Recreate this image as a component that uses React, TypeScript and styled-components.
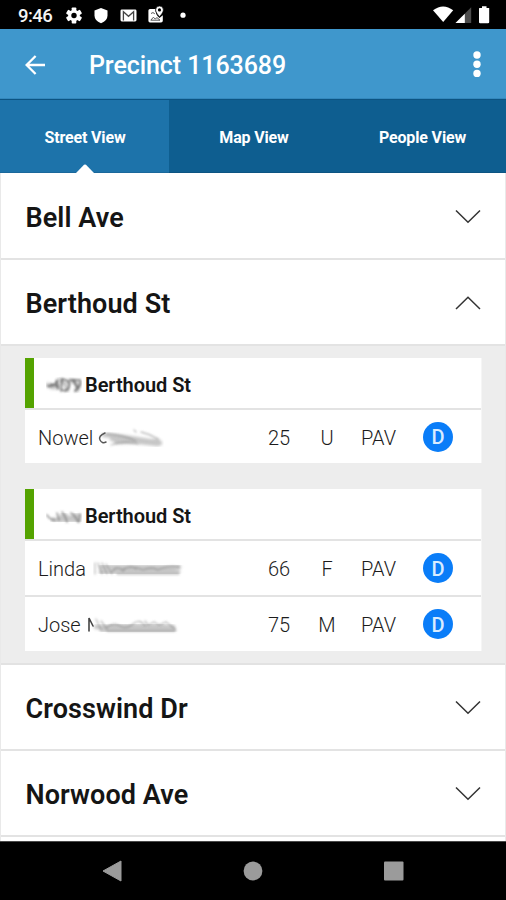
import React from "react";
import styled, { createGlobalStyle } from "styled-components";

const GlobalStyle = createGlobalStyle`
  * { box-sizing: border-box; }
  body { margin: 0; background: #000; }
  svg { display: block; flex: none; }
`;

const Screen = styled.div`
  width: 506px;
  height: 900px;
  display: flex;
  flex-direction: column;
  overflow: hidden;
  background: #fff;
  color: #151515;
  font-family: Roboto, "Liberation Sans", sans-serif;
`;

const StatusBar = styled.div`
  flex: none;
  height: 29px;
  padding: 0 16px 0 18px;
  display: flex;
  align-items: center;
  justify-content: space-between;
  background: #000;
`;

const Clock = styled.span`
  width: 46px;
  color: #f4f4f4;
  font-size: 18.5px;
  font-weight: 500;
  line-height: 29px;
  padding-top: 3px;
  letter-spacing: -0.55px;
`;

const StatusGroup = styled.div`
  display: flex;
  align-items: center;
`;

const AppBar = styled.header`
  flex: none;
  height: 70px;
  display: flex;
  align-items: center;
  padding: 2px 20px 0 25px;
  background: #3f97cc;
  border-bottom: 1px solid #3388bd;
`;

const Title = styled.h1`
  flex: 1;
  margin: 0 0 0 44px;
  padding-top: 3px;
  color: #fff;
  font-size: 25px;
  font-weight: 500;
  line-height: 32px;
  letter-spacing: -0.08px;
`;

const Tabs = styled.nav`
  flex: none;
  height: 74px;
  display: grid;
  grid-template-columns: 169px 169px 168px;
  border-top: 1px solid #0c5482;
  background: #0e5e90;
`;

const Tab = styled.div<{ $active?: boolean }>`
  position: relative;
  display: flex;
  align-items: center;
  justify-content: center;
  background: ${(p) => (p.$active ? "#1d73aa" : "#0e5e90")};
  border-bottom: 1px solid ${(p) => (p.$active ? "#1a689b" : "#0c5482")};
  color: #fff;
  font-size: 16px;
  font-weight: 700;
  letter-spacing: -0.15px;
  padding: 2px 0 0 1px;
`;

const Pointer = styled.svg`
  position: absolute;
  left: 76px;
  bottom: -1px;
`;

const Content = styled.main`
  flex: 1;
  min-height: 0;
  overflow: hidden;
  border-left: 1px solid #e9e9e9;
  border-right: 1px solid #e9e9e9;
`;

const Street = styled.section<{ $raised?: boolean }>`
  height: ${(p) => (p.$raised ? "87px" : "86px")};
  padding: 0 24px 0 24px;
  display: flex;
  align-items: center;
  justify-content: space-between;
  border-bottom: 2px solid #e3e3e3;
  background: #fff;
`;

const StreetName = styled.h2<{ $raised?: boolean }>`
  margin: 0;
  padding: ${(p) => (p.$raised ? "5px" : "3px")} 0 0 0.5px;
  font-size: 27px;
  font-weight: 600;
  line-height: 36px;
  letter-spacing: 0.08px;
`;

const Panel = styled.div`
  height: 319px;
  margin: 0 -1px;
  padding: 12px 24px 0 25px;
  display: flex;
  flex-direction: column;
  gap: 26px;
  background: #ededed;
  border-bottom: 2px solid #e2e2e2;
`;

const Card = styled.div`
  background: #fff;
  border-right: 1px solid #f5f5f5;
`;

const Address = styled.div`
  height: 50px;
  display: flex;
  align-items: center;
  border-left: 9px solid #54a300;
  padding: 3px 0 0 12px;
  font-size: 20px;
  font-weight: 600;
  letter-spacing: -0.06px;
  gap: 3px;
`;

const Voter = styled.div`
  height: 56px;
  padding: 2px 0 0 13px;
  display: grid;
  grid-template-columns: 216px 50px 46px 57px 62px;
  align-items: center;
  border-top: 2px solid #e3e3e3;
  font-size: 20px;
  font-weight: 350;
  color: #1c1c1c;

  &:nth-child(2):last-child {
    height: 55px;
  }
`;

const Person = styled.div<{ $gap: number }>`
  display: flex;
  align-items: center;
  gap: ${(p) => p.$gap}px;
`;

const Cell = styled.div`
  text-align: center;
`;

const Party = styled.div`
  width: 30px;
  height: 30px;
  margin: -2px auto 0;
  display: flex;
  align-items: center;
  justify-content: center;
  border-radius: 50%;
  background: #0a7df8;
  color: #d9ecff;
  font-size: 20px;
  font-weight: 500;
  padding-top: 1px;
`;

const NavBar = styled.footer`
  flex: none;
  height: 59px;
  display: grid;
  grid-template-columns: 183px 140px 183px;
  align-items: center;
  background: #000;
  border-top: 1px solid #4a4a4a;
`;

const NavButton = styled.div<{ $side: "start" | "middle" | "end" }>`
  display: flex;
  justify-content: ${(p) => (p.$side === "start" ? "flex-start" : p.$side === "end" ? "flex-end" : "center")};
  padding: ${(p) => (p.$side === "start" ? "0 0 0 102px" : p.$side === "end" ? "0 102px 0 0" : "0")};
`;

const Chevron = ({ up }: { up?: boolean }) => (
  <svg width="26" height="18" viewBox="0 -2 26 18" fill="none" stroke="#333" strokeWidth="1.5">
    <path d={up ? "M1 14 13 2.2 25 14" : "M1 1.5 13 13.3 25 1.5"} />
  </svg>
);

const StatusIcons = () => (
  <svg width="122" height="29" viewBox="64 0 122 29" fill="#fff">
    <g transform="translate(74 15.5)">
      {[0, 60, 120].map((a) => (
        <rect key={a} x="-2.3" y="-8" width="4.6" height="16" rx="0.8" transform={`rotate(${a})`} />
      ))}
      <circle r="5.8" />
      <circle r="2.7" fill="#000" />
    </g>
    <path d="M101 8 107.5 10.5V15.5Q107.5 20.7 101 23.2 94.5 20.7 94.5 15.5V10.5Z" />
    <rect x="120.5" y="9.5" width="16" height="12" rx="1.4" />
    <path d="M123.4 20.5V11.8L128.5 16.3 133.6 11.8V20.5" fill="none" stroke="#444" strokeWidth="1.3" />
    <path d="M150 9H155.6Q154.8 14 159.5 18L162.8 15.2V20.7Q162.8 22.4 161 22.4H150Q148.4 22.4 148.4 20.7V10.6Q148.4 9 150 9Z" />
    <path d="M159.5 6A3.9 3.9 0 0 1 163.4 9.9C163.4 12.8 159.5 16.5 159.5 16.5S155.6 12.8 155.6 9.9A3.9 3.9 0 0 1 159.5 6Z" stroke="#000" strokeWidth="0.7" />
    <circle cx="159.5" cy="9.9" r="1.6" fill="#000" />
    <path d="M150.8 20.2 153.4 17.2 155.2 19 157 17.6 160 20.2Z M151 13.5Q153 11.5 154.8 13.8" fill="none" stroke="#555" strokeWidth="1" />
    <circle cx="183" cy="15.2" r="2.6" />
  </svg>
);

const SignalIcons = () => (
  <svg width="58" height="29" viewBox="432 0 58 29" fill="#fff">
    <path d="M433 10.3Q443.2 2.6 453.2 10.3L443.2 22Z" />
    <path d="M471.2 7.2V23H455.5Z" fill="#4c4c4c" />
    <path d="M464.8 13.7V23H455.5Z" />
    <path d="M479.5 8H482V6.2H486.5V8H489.2V22.2Q489.2 23.3 488 23.3H480.2Q479 23.3 479 22.2V8.8Q479 8 479.5 8Z" />
  </svg>
);

const smudges = {
  first: {
    w: 36,
    base: "M2 11Q7 15 12 12M13 6Q21 8 21 16M24 7Q35 7 31 16",
    lines: "M2 12Q9 13 11 6L12 15M5 10 11 12M15 17 16 5Q25 6 23 13Q21 18 16 16M24 6H34Q36 11 29 17M27 6 31 13",
  },
  second: {
    w: 36,
    base: "M7 15 33 15M14 13Q17 8 21 12M23 15Q27 9 33 11",
    lines: "M1 10Q4 15 9 15M11 8 13 15M16 7Q19 10 21 17M25 8Q29 10 32 17M34 9 33 17",
  },
  nowel: {
    w: 66,
    base: "M6 8Q30 10 62 16M14 12 60 17M18 15 60 14",
    lines: "M9 7Q25 8 38 14M13 18Q26 13 40 17M36 3 38 5M43 5Q52 7 60 12",
  },
  linda: {
    w: 94,
    base: "M8 9H86M8 14H85M22 12H80",
    lines: "M2 5V16M5 5 9 16M9 5 14 16M13 6 19 16M18 15Q24 6 30 13Q36 6 43 11M30 11Q40 7 50 12 59 8 65 12 75 7 86 9M24 16H86",
  },
  jose: {
    w: 92,
    base: "M9 13H86M15 16H87M24 12H76",
    lines: "M9 5 14 16M14 7 20 15M20 13Q27 8 33 12T46 10 58 12M58 7 61 11 67 8 72 11 79 8 88 15M20 17H88",
  },
};

const Smudge = ({ kind }: { kind: keyof typeof smudges }) => {
  const s = smudges[kind];
  const bold = kind === "first" || kind === "second";
  return (
    <svg width={s.w} height="22" viewBox={`0 0 ${s.w} 22`} fill="none" strokeLinecap="round">
      <defs>
        <filter id={`haze-${kind}`} x="-10%" y="-30%" width="120%" height="160%">
          <feGaussianBlur stdDeviation="1.4" />
        </filter>
        <filter id={`soft-${kind}`} x="-10%" y="-30%" width="120%" height="160%">
          <feGaussianBlur stdDeviation="0.8" />
        </filter>
      </defs>
      <path d={s.base} stroke="#c6c6c6" strokeWidth="4.5" filter={`url(#haze-${kind})`} />
      <path
        d={s.lines}
        stroke={kind === "first" ? "#444" : "#777"}
        strokeOpacity={bold ? 0.7 : 0.5}
        strokeWidth={bold ? 1.7 : 1.3}
        filter={`url(#soft-${kind})`}
      />
      {kind === "nowel" && <path d="M7 6Q0 9 2 13 4 17 8 15" stroke="#555" strokeWidth="1.5" />}
      {kind === "jose" && <path d="M2 17V4L6 12" stroke="#444" strokeWidth="1.6" />}
    </svg>
  );
};

type VoterProps = {
  name: string;
  smudge: keyof typeof smudges;
  gap: number;
  age: number;
  sex: string;
};

const VoterRow = ({ name, smudge, gap, age, sex }: VoterProps) => (
  <Voter>
    <Person $gap={gap}>
      <span>{name}</span>
      <Smudge kind={smudge} />
    </Person>
    <Cell>{age}</Cell>
    <Cell>{sex}</Cell>
    <Cell>PAV</Cell>
    <Party>D</Party>
  </Voter>
);

export default function App() {
  return (
    <Screen>
      <GlobalStyle />
      <StatusBar>
        <StatusGroup>
          <Clock>9:46</Clock>
          <StatusIcons />
        </StatusGroup>
        <SignalIcons />
      </StatusBar>
      <AppBar>
        <svg width="20" height="20" viewBox="0 0 20 20" fill="none" stroke="#fff" strokeWidth="2.3">
          <path d="M20 10H2M10.6 1 1.6 10 10.6 19" />
        </svg>
        <Title>Precinct 1163689</Title>
        <svg width="18" height="28" viewBox="0 0 18 28" fill="#fff">
          <circle cx="9" cy="4" r="3.7" />
          <circle cx="9" cy="13.2" r="3.7" />
          <circle cx="9" cy="22.4" r="3.7" />
        </svg>
      </AppBar>
      <Tabs>
        <Tab $active>
          Street View
          <Pointer width="18" height="9" viewBox="0 0 18 9" fill="#fff">
            <path d="M0 9 8 .8Q9 0 10 .8L18 9Z" />
          </Pointer>
        </Tab>
        <Tab>Map View</Tab>
        <Tab>People View</Tab>
      </Tabs>
      <Content>
        <Street $raised>
          <StreetName $raised>Bell Ave</StreetName>
          <Chevron />
        </Street>
        <Street>
          <StreetName>Berthoud St</StreetName>
          <Chevron up />
        </Street>
        <Panel>
          <Card>
            <Address>
              <Smudge kind="first" />
              <span>Berthoud St</span>
            </Address>
            <VoterRow name="Nowel" smudge="nowel" gap={5} age={25} sex="U" />
          </Card>
          <Card>
            <Address>
              <Smudge kind="second" />
              <span>Berthoud St</span>
            </Address>
            <VoterRow name="Linda" smudge="linda" gap={7} age={66} sex="F" />
            <VoterRow name="Jose" smudge="jose" gap={6} age={75} sex="M" />
          </Card>
        </Panel>
        <Street>
          <StreetName>Crosswind Dr</StreetName>
          <Chevron />
        </Street>
        <Street>
          <StreetName>Norwood Ave</StreetName>
          <Chevron />
        </Street>
      </Content>
      <NavBar>
        <NavButton $side="start">
          <svg width="20" height="22" viewBox="0 0 20 22" fill="#9b9b9b">
            <path d="M1 11 19 1V21Z" stroke="#9b9b9b" strokeLinejoin="round" />
          </svg>
        </NavButton>
        <NavButton $side="middle">
          <svg width="20" height="20" viewBox="0 0 20 20" fill="#9b9b9b">
            <circle cx="10" cy="10" r="9.4" />
          </svg>
        </NavButton>
        <NavButton $side="end">
          <svg width="21" height="20" viewBox="0 0 21 20" fill="#9b9b9b">
            <rect x="1" y="0.5" width="19.5" height="19" rx="1" />
          </svg>
        </NavButton>
      </NavBar>
    </Screen>
  );
}
